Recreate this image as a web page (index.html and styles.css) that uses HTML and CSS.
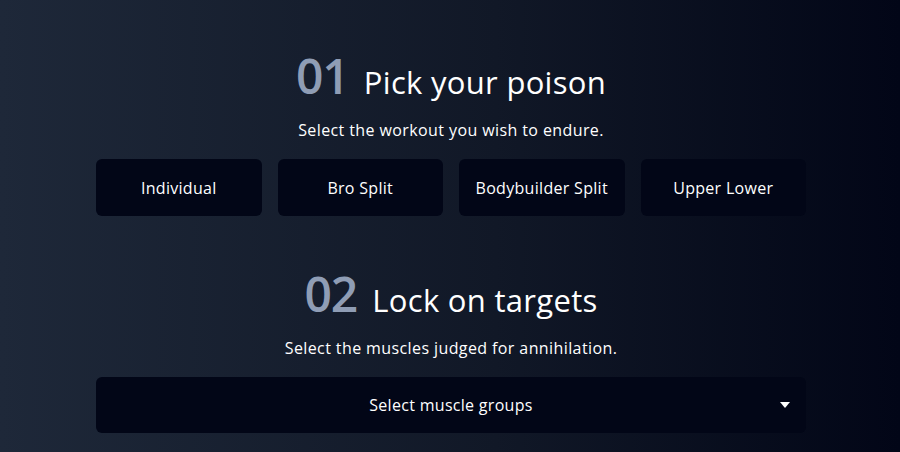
FILE: index.html
```html
<!DOCTYPE html>
<html lang="en">
<head>
<meta charset="utf-8">
<title>Workout</title>
<link rel="stylesheet" href="styles.css">
</head>
<body>
<main class="page">
  <section class="step">
    <h2 class="step-title"><span class="step-num">01</span><span class="step-name">Pick your poison</span></h2>
    <p class="step-sub">Select the workout you wish to endure.</p>
    <div class="options">
      <button class="option">Individual</button>
      <button class="option">Bro Split</button>
      <button class="option">Bodybuilder Split</button>
      <button class="option">Upper Lower</button>
    </div>
  </section>
  <section class="step step-2">
    <h2 class="step-title"><span class="step-num">02</span><span class="step-name">Lock on targets</span></h2>
    <p class="step-sub">Select the muscles judged for annihilation.</p>
    <div class="select">
      <span class="select-label">Select muscle groups</span>
      <svg class="select-caret" width="10" height="6" viewBox="0 0 10 6"><path d="M0 0H10L5 6Z" fill="#fff"/></svg>
    </div>
  </section>
</main>
</body>
</html>
```
FILE: styles.css
```css
* { box-sizing: border-box; }
html, body { margin: 0; height: 100%; }
body {
  background: linear-gradient(to right, #1e2839 0%, #111827 55%, #020617 100%);
  color: #fff;
  font-family: "Open Sans", "Noto Sans", sans-serif;
  overflow: hidden;
}
.page {
  width: 710px;
  margin: 0 0 0 96px;
  padding-top: 52px;
  display: flex;
  flex-direction: column;
  gap: 54px;
}
.step { display: flex; flex-direction: column; align-items: center; }
.step-title {
  margin: 0;
  display: flex;
  align-items: baseline;
  gap: 15px;
  line-height: 48px;
  font-weight: 400;
}
.step-num {
  font-size: 48px;
  font-weight: 600;
  color: #8f9db5;
  letter-spacing: -1px;
}
.step-name { font-size: 31px; font-weight: 400; color: #fff; letter-spacing: 0.3px; }
.step-sub {
  margin: 12px 0 0;
  font-size: 16px;
  line-height: 24px;
  letter-spacing: 0.4px;
  color: #fff;
}
.options {
  margin-top: 17px;
  width: 100%;
  display: grid;
  grid-template-columns: repeat(4, 1fr);
  gap: 16px;
}
.option {
  height: 57px;
  border: 0;
  border-radius: 6px;
  background: #020617;
  color: #fff;
  font-family: inherit;
  font-size: 16px;
  letter-spacing: 0.3px;
  padding: 0;
}
.select {
  margin-top: 17px;
  width: 100%;
  height: 56px;
  border-radius: 6px;
  background: #020617;
  display: flex;
  align-items: center;
  justify-content: center;
  position: relative;
  font-size: 16px;
  letter-spacing: 0.3px;
}
.select-caret { position: absolute; right: 16px; top: 25px; }
```
